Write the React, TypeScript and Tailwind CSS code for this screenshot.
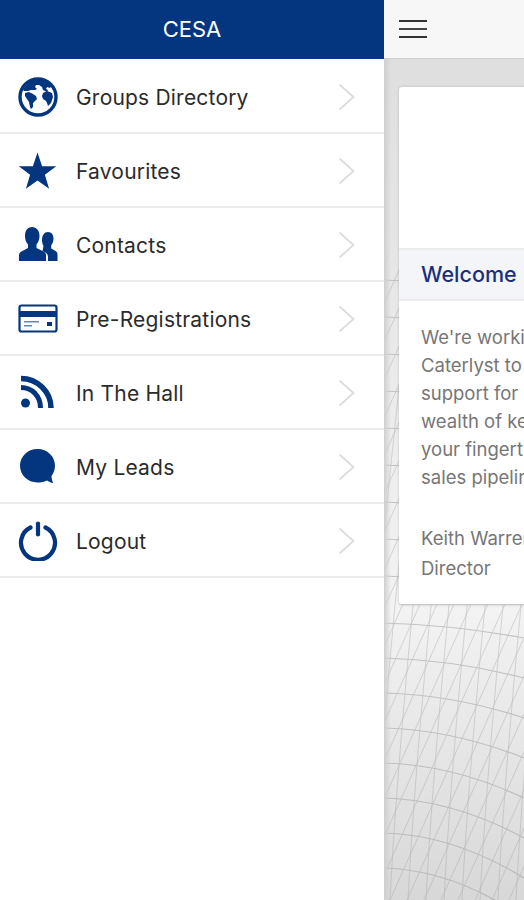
const items = [
  { label: "Groups Directory", icon: <Globe /> },
  { label: "Favourites", icon: <Star /> },
  { label: "Contacts", icon: <People /> },
  { label: "Pre-Registrations", icon: <Card /> },
  { label: "In The Hall", icon: <Rss /> },
  { label: "My Leads", icon: <Chat /> },
  { label: "Logout", icon: <Power /> },
];

const NAVY = "#03367f";

function Globe() {
  return (
    <svg width="40" height="40" viewBox="0 0 40 40">
      <circle cx="20" cy="20" r="18" fill="#fff" stroke={NAVY} strokeWidth="3.400" />
      <path fill={NAVY} d="M5 13C8 7 13 3 20 2l8 1 6 5-2 3-3-1-1 2 2 1-1 2-4-2-1-3-3-2-3 0-1 2 2 2-2 1-4 0-3 1-4 0z" />
      <path fill={NAVY} d="M7 16l4-1 4 2 3 2 1 3-2 2-2 2 0 4-2 2-1-2-1-5-2-3-2-3z" />
      <path fill={NAVY} d="M25 16l4-2 5 2 1 4-2 6-3 3-1-3-1-2-3-2-1-3z" />
    </svg>
  );
}
function Star() {
  return (
    <svg width="40" height="40" viewBox="0 0 40 40">
      <path fill={NAVY} d="M19.500 1.500l4.600 13.700h14.200l-11.400 8.600 4.200 13.900-11.600-8.300-11.600 8.300 4.200-13.900L.7 15.200h14.200z" />
    </svg>
  );
}
function People() {
  return (
    <svg width="40" height="36" viewBox="0 0 40 36">
      <path fill={NAVY} d="M30 5c3.500 0 5.500 2.800 5.500 6.500 0 2.800-1 5.200-2.300 6.700v3.300l3.500 2c1.800 1 2.800 1.800 2.800 3.500V34H30v-4c0-2.500-1.500-4-3.500-5l-2-1 1-5c-1-1.500-1.500-4-1.500-6 0-5 2.500-8 6-8z" />
      <path fill={NAVY} d="M14 0c4.500 0 7.500 3.500 7.500 9 0 3.500-1.200 6.500-3 8.500V21l7 3.500c2 1 2.500 2 2.500 4V34H1v-5.500c0-2 .5-3 2.500-4L10 21v-3.500c-2-2-3-5-3-8.500C7 3.500 9.500 0 14 0z" />
    </svg>
  );
}
function Card() {
  return (
    <svg width="40" height="30" viewBox="0 0 40 30">
      <rect x="1.500" y="1.500" width="37" height="26" rx="2" fill="#fff" stroke={NAVY} strokeWidth="2.200" />
      <rect x="1" y="7" width="38" height="6" fill={NAVY} />
      <rect x="6" y="17" width="15" height="1.500" fill={NAVY} opacity="0.6" />
      <rect x="6" y="21" width="8" height="1.500" fill={NAVY} opacity="0.6" />
      <rect x="29" y="18" width="5" height="4" fill={NAVY} />
    </svg>
  );
}
function Rss() {
  return (
    <svg width="40" height="36" viewBox="0 0 40 36">
      <circle cx="7.500" cy="28" r="4.500" fill={NAVY} />
      <path fill="none" stroke={NAVY} strokeWidth="5" d="M3 12.500c11 0 19.500 8.500 19.500 20.500" />
      <path fill="none" stroke={NAVY} strokeWidth="5.500" d="M3 3.500c16 0 30 13 30 29.500" />
    </svg>
  );
}
function Chat() {
  return (
    <svg width="40" height="38" viewBox="0 0 40 38">
      <path fill={NAVY} d="M19.500 1C29.500 1 37 8.500 37 17.500c0 4-1.500 7.500-3.500 10.500 0 2.500.8 5 1.800 7-2.300-.3-4.800-1.300-6.300-2.500-3 1.500-6.200 2-9.500 2C9.500 34.500 2 27 2 17.800 2 8.500 9.500 1 19.500 1z" />
    </svg>
  );
}
function Power() {
  return (
    <svg width="40" height="40" viewBox="0 0 40 40">
      <path fill="none" stroke={NAVY} strokeWidth="4.200" strokeLinecap="round" d="M12.500 6.500A17 17 0 1 0 27.500 6.500" />
      <path fill="none" stroke={NAVY} strokeWidth="4.200" strokeLinecap="round" d="M20 2.500v11" />
    </svg>
  );
}

function Mesh() {
  const arcs = Array.from({ length: 8 }, (_, i) => {
    const y = 623 + i * 35;
    const drop = 15 + i * 5;
    return `M0 ${y} Q 70 ${y + 2} 140 ${y + drop}`;
  });
  const upper = Array.from({ length: 9 }, (_, i) => {
    const y = 280 + i * 37;
    return `M0 ${y} L20 ${y + 1}`;
  });
  const rays1 = Array.from({ length: 36 }, (_, i) => {
    const x = -300 + i * 17;
    return `M${x} 900 L${x + 290} 250`;
  });
  const rays2 = Array.from({ length: 17 }, (_, i) => {
    const x = -30 + i * 18;
    return `M${x} 900 Q ${x + 10} 700 ${x + 60} 250`;
  });
  return (
    <svg className="absolute left-0 top-0 blur-[0.5px]" width="140" height="900" viewBox="0 0 140 900">
      <defs>
        <linearGradient id="fade" x1="0" y1="0" x2="0" y2="1">
          <stop offset="0.28" stopColor="#000" />
          <stop offset="0.30" stopColor="#fff" />
          <stop offset="1" stopColor="#fff" />
        </linearGradient>
        <mask id="m"><rect width="140" height="900" fill="url(#fade)" /></mask>
      </defs>
      <g fill="none" stroke="#a0a0a0" strokeWidth="0.7" opacity="0.55" mask="url(#m)">
        {arcs.map((d) => <path key={d} d={d} strokeWidth="1.200" />)}
        {upper.map((d) => <path key={d} d={d} strokeWidth="1.200" />)}
        {rays1.map((d) => <path key={d} d={d} />)}
        {rays2.map((d) => <path key={d} d={d} />)}
      </g>
    </svg>
  );
}

const lines = [
  "We're working with",
  "Caterlyst to provide",
  "support for our members",
  "wealth of key contacts at",
  "your fingertips to grow",
  "sales pipeline",
];

export default function App() {
  return (
    <div className="flex h-[900px] w-[524px] overflow-hidden bg-white font-['Inter','Liberation_Sans',sans-serif]">
      <aside className="w-[384px] shrink-0 bg-white">
        <header className="flex h-[59px] items-center justify-center bg-[#03367f] text-[22px] text-white">CESA</header>
        <ul className="pt-[1px]">
          {items.map((item) => (
            <li key={item.label} className="flex h-[74px] items-center border-b-2 border-[#ececec] pl-[18px] pr-[29px] pt-[2px]">
              <span className="flex w-[40px] shrink-0 items-center justify-center">{item.icon}</span>
              <span className="ml-[18px] flex-1 pt-[2px] text-[21px] tracking-[0.2px] text-[#2b2b2b]">{item.label}</span>
              <svg width="17" height="28" viewBox="0 0 17 28" fill="none" stroke="#dcdcdc" strokeWidth="1.800">
                <path d="M1.500 1.500l14 12.500-14 12.500" />
              </svg>
            </li>
          ))}
        </ul>
      </aside>
      <main className="relative flex min-w-0 flex-1 flex-col overflow-hidden">
        <div className="relative z-10 flex h-[59px] shrink-0 items-center border-b border-[#d0d0d0] bg-[#f7f7f7] pl-[15px]">
          <div className="flex w-[28px] flex-col gap-[6px]">
            <span className="h-[2px] bg-[#333]" />
            <span className="h-[2px] bg-[#444]" />
            <span className="h-[2px] bg-[#333]" />
          </div>
        </div>
        <div className="relative flex-1 overflow-hidden bg-gradient-to-b from-[#dfdfdf] via-[#f3f3f3] via-65% to-[#d8d8d8]">
          <div className="absolute left-0 top-[-59px]"><Mesh /></div>
          <div className="absolute inset-y-0 left-0 w-[7px] bg-gradient-to-r from-[#cfcfcf] to-transparent" />
          <div className="relative ml-[15px] mt-[28px] h-[518px] w-[480px] rounded-[3px] border-b border-[#c8c8c8] bg-white shadow-[0_0_3px_rgba(0,0,0,0.18)]">
            <div className="h-[161px]" />
            <div className="flex h-[53px] items-center border-y-2 border-[#ececec] bg-[#f4f5f8] pl-[22px] text-[21.500px] font-medium text-[#1a2f7d]">Welcome</div>
            <div className="pl-[22px] pt-[22px] text-[18.500px] leading-[28px] text-[#767676]">
              {lines.map((l) => <p key={l} className="whitespace-nowrap">{l}</p>)}
              <p className="mt-[33px] whitespace-nowrap">Keith Warren</p>
              <p className="mt-[2px]">Director</p>
            </div>
          </div>
        </div>
      </main>
    </div>
  );
}
